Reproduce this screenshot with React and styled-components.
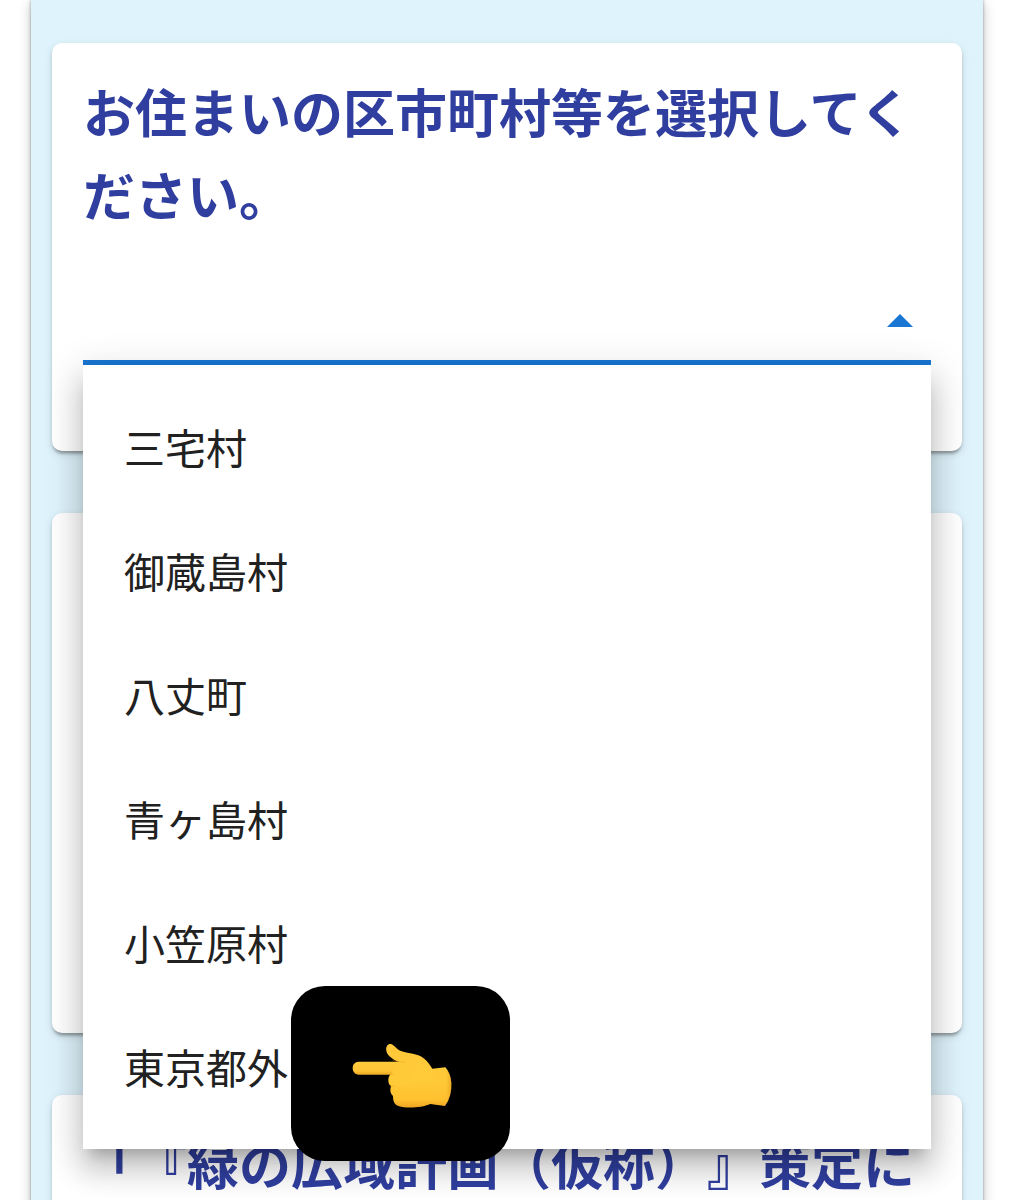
import React, { useState } from "react";
import styled, { createGlobalStyle } from "styled-components";

const GlobalStyle = createGlobalStyle`
  *, *::before, *::after { box-sizing: border-box; }
  body {
    margin: 0;
    background: #fff;
    color: #212121;
    font-family: "Noto Sans CJK JP", "Noto Sans", sans-serif;
    text-spacing-trim: space-all;
  }
`;

const Page = styled.div`
  height: 100vh;
  padding: 0 30px 0 31px;
  overflow: hidden;
`;

const Panel = styled.main`
  display: flex;
  flex-direction: column;
  gap: 62px;
  min-height: 100%;
  padding: 43px 21px;
  background: #dff3fc;
  box-shadow: 0 0 3px rgba(0, 0, 0, 0.35), 0 3px 12px rgba(0, 0, 0, 0.22);
`;

const Card = styled.section`
  min-height: ${(p) => (p.$tall ? "520px" : "0")};
  padding: 26px 31px 86px;
  border-radius: 10px;
  background: #fff;
  box-shadow: 0 5px 3px -3px rgba(0, 0, 0, 0.2), 0 3px 3px rgba(0, 0, 0, 0.14),
    0 3px 8px rgba(0, 0, 0, 0.12);
`;

const Question = styled.h2`
  margin: 0;
  color: #303f9f;
  font-size: 52px;
  font-weight: 700;
  line-height: 83px;
  line-break: anywhere;
`;

const Field = styled.div`
  position: relative;
  display: flex;
  align-items: center;
  margin-top: 45px;
  border-bottom: 5px solid #1976d2;
`;

const Select = styled.select`
  flex: 1;
  min-width: 0;
  height: 80px;
  padding: 0 62px 0 0;
  border: 0;
  outline: 0;
  appearance: none;
  background: transparent;
  color: inherit;
  font: inherit;
  font-size: 41px;
`;

const Caret = styled.svg`
  position: absolute;
  right: 18px;
  width: 26px;
  height: 13px;
  pointer-events: none;
  fill: #1976d2;
  transform: ${(p) => (p.$open ? "none" : "rotate(180deg)")};
`;

const Menu = styled.ul`
  position: absolute;
  z-index: 1;
  top: calc(100% + 5px);
  left: 0;
  right: 0;
  margin: 0;
  padding: 19px 0 21px;
  list-style: none;
  background: #fff;
  box-shadow: 0 13px 13px -8px rgba(0, 0, 0, 0.2),
    0 21px 26px 3px rgba(0, 0, 0, 0.14), 0 8px 36px 5px rgba(0, 0, 0, 0.12);
`;

const MenuItem = styled.li`
  position: relative;
`;

const Option = styled.button`
  display: block;
  width: 100%;
  height: 124px;
  padding: 0 41px;
  border: 0;
  background: transparent;
  color: inherit;
  font: inherit;
  font-size: 41px;
  line-height: 62px;
  text-align: left;
  cursor: pointer;
`;

const Pointer = styled.div`
  position: absolute;
  top: -18px;
  left: 208px;
  display: flex;
  align-items: center;
  justify-content: center;
  width: 219px;
  height: 175px;
  padding: 5px 0 0 3px;
  border-radius: 34px;
  background: #000;
  pointer-events: none;
`;

const places = ["三宅村", "御蔵島村", "八丈町", "青ヶ島村", "小笠原村", "東京都外"];

function PointingHand() {
  return (
    <svg width="100" height="66" viewBox="36 24 300 198" aria-hidden="true">
      <defs>
        <linearGradient id="skin" x1="0" y1="0" x2="0" y2="1">
          <stop offset="0" stopColor="#ffc83a" />
          <stop offset="0.55" stopColor="#ffcb38" />
          <stop offset="0.88" stopColor="#ffc130" />
          <stop offset="1" stopColor="#eca522" />
        </linearGradient>
        <linearGradient id="finger" x1="0" y1="0" x2="0" y2="1">
          <stop offset="0" stopColor="#ffcc3c" />
          <stop offset="0.7" stopColor="#ffc435" />
          <stop offset="1" stopColor="#eca824" />
        </linearGradient>
        <linearGradient id="wrist" x1="0" y1="0" x2="1" y2="0">
          <stop offset="0" stopColor="#e99a1c" stopOpacity="0" />
          <stop offset="0.75" stopColor="#e99a1c" stopOpacity="0.05" />
          <stop offset="1" stopColor="#e08e19" stopOpacity="0.55" />
        </linearGradient>
      </defs>
      <path
        fill="url(#skin)"
        d="M150 82 H180 C158 74 141 61 139 47 C137 34 143 27 151 27 C163 28 168 43 185 49 C207 56 232 56 249 68 C264 79 271 91 277 101 L316 97 Q331 113 334 143 Q336 184 315 213 L271 207 C249 217 211 220 187 216 C166 213 159 204 159 183 C151 176 149 166 153 153 C144 148 142 130 150 119 Z"
      />
      <path
        fill="url(#finger)"
        d="M56 80 H180 V119 H56 C44 119 38 109 38 99 C38 89 44 80 56 80 Z"
      />
      <path
        fill="#ffca38"
        d="M158 82 H215 V154 H167 C153 149 149 134 152 120 C160 112 162 96 158 82 Z"
      />
      <path
        fill="none"
        stroke="#df981f"
        strokeWidth="3"
        strokeOpacity="0.35"
        strokeLinecap="round"
        d="M158 76 C170 82 185 79 197 82 M151 120 C154 117 157 118 162 119 M153 153 C157 152 161 153 165 154"
      />
      <path
        fill="url(#wrist)"
        d="M276 101 L316 97 Q331 113 334 143 Q336 184 315 213 L271 207 Z"
      />
    </svg>
  );
}

export default function App() {
  const [open, setOpen] = useState(true);
  const [place, setPlace] = useState("");

  const toggle = (event) => {
    event.preventDefault();
    setOpen(!open);
  };

  const choose = (name) => {
    setPlace(name);
    setOpen(false);
  };

  return (
    <>
      <GlobalStyle />
      <Page>
        <Panel>
          <Card>
            <Question>
              <label htmlFor="place">お住まいの区市町村等を選択してください。</label>
            </Question>
            <Field>
              <Select
                id="place"
                value={place}
                onMouseDown={toggle}
                onChange={(event) => choose(event.target.value)}
              >
                <option value="" />
                {places.map((name) => (
                  <option key={name}>{name}</option>
                ))}
              </Select>
              <Caret $open={open} viewBox="0 0 26 13" aria-hidden="true">
                <path d="M0 13 13 0 26 13Z" />
              </Caret>
              {open && (
                <Menu>
                  {places.map((name) => (
                    <MenuItem key={name}>
                      <Option type="button" onClick={() => choose(name)}>
                        {name}
                      </Option>
                      {name === "東京都外" && (
                        <Pointer>
                          <PointingHand />
                        </Pointer>
                      )}
                    </MenuItem>
                  ))}
                </Menu>
              )}
            </Field>
          </Card>
          <Card $tall />
          <Card>
            <Question>「『緑の広域計画（仮称）』策定に</Question>
          </Card>
        </Panel>
      </Page>
    </>
  );
}
